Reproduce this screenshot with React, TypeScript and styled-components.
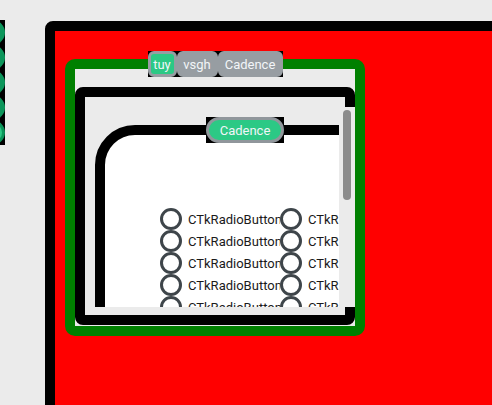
import React from "react";
import styled, { createGlobalStyle } from "styled-components";

const Global = createGlobalStyle`
  html, body { margin: 0; padding: 0; background: #ebebeb; }
  body { font-family: Roboto, "Liberation Sans", sans-serif; }
`;

const Screen = styled.div`
  width: 492px;
  height: 405px;
  overflow: hidden;
  display: flex;
  align-items: flex-start;
  background: #ebebeb;
`;

const SideStrip = styled.div`
  flex-shrink: 0;
  width: 5px;
  height: 125px;
  margin-top: 20px;
  background: #000;
  overflow: hidden;
  display: flex;
  flex-direction: column;
`;

const SideDot = styled.div<{ $active?: boolean }>`
  flex-shrink: 0;
  box-sizing: border-box;
  width: 25px;
  height: 25px;
  margin-left: -20px;
  border-radius: 50%;
  background: ${(p) => (p.$active ? "#2CC985" : "#0C955A")};
  border: ${(p) => (p.$active ? "3px solid #0C955A" : "none")};
`;

const Window = styled.div`
  flex-shrink: 0;
  box-sizing: border-box;
  width: 470px;
  height: 400px;
  margin: 21px 0 0 40px;
  padding: 28px 0 0 10px;
  border: 10px solid #000;
  border-radius: 8px;
  background: #ff0000;
`;

const TabView = styled.div`
  position: relative;
  box-sizing: border-box;
  width: 300px;
  height: 277px;
  padding-top: 18px;
  border: 10px solid #008000;
  border-radius: 10px;
  background: #ebebeb;
`;

const TabBar = styled.div`
  position: absolute;
  top: -18px;
  left: 0;
  right: 0;
  display: flex;
  justify-content: center;
`;

const Segment = styled.div<{ $w: number }>`
  width: ${(p) => p.$w}px;
  height: 26px;
  background: #000;
`;

const SegmentFace = styled.div<{ $selected?: boolean }>`
  box-sizing: border-box;
  height: 100%;
  display: flex;
  align-items: center;
  justify-content: center;
  border: 3px solid #979da2;
  border-radius: 6px;
  background: ${(p) => (p.$selected ? "#2CC985" : "#979DA2")};
  color: #f2f5f8;
  font-size: 13px;
  line-height: 1;
`;

const ScrollFrame = styled.div`
  position: relative;
  box-sizing: border-box;
  height: 238px;
  border: 10px solid #000;
  border-radius: 8px;
  background: #ebebeb;
`;

const Viewport = styled.div`
  box-sizing: border-box;
  width: 254px;
  height: 210px;
  padding: 28px 0 0 10px;
  overflow: hidden;
`;

const Card = styled.div`
  position: relative;
  box-sizing: border-box;
  width: 300px;
  height: 300px;
  padding: 73px 0 0 55px;
  border: 10px solid #000;
  border-radius: 40px;
  background: #fff;
`;

const CardHeader = styled.div`
  position: absolute;
  top: -18px;
  left: 0;
  right: 0;
  display: flex;
  justify-content: center;
`;

const ButtonPlate = styled.div`
  width: 78px;
  height: 26px;
  background: #000;
`;

const PillButton = styled.div`
  box-sizing: border-box;
  height: 100%;
  display: flex;
  align-items: center;
  justify-content: center;
  border: 3px solid #90969b;
  border-radius: 13px;
  background: #2cc985;
  color: #f2f5f8;
  font-size: 13px;
  line-height: 1;
`;

const RadioGrid = styled.div`
  display: grid;
  grid-template-columns: repeat(2, 120px);
  grid-auto-rows: 22px;
`;

const Radio = styled.div`
  display: flex;
  align-items: center;
  gap: 6px;
  min-width: 0;
  overflow: hidden;
`;

const RadioCircle = styled.span`
  flex-shrink: 0;
  box-sizing: border-box;
  width: 22px;
  height: 22px;
  border: 3px solid #3e454a;
  border-radius: 50%;
  background: #fff;
`;

const RadioLabel = styled.span`
  white-space: nowrap;
  overflow: hidden;
  color: #1a1a1a;
  font-size: 13px;
`;

const Scrollbar = styled.div`
  position: absolute;
  top: 10px;
  right: -10px;
  box-sizing: border-box;
  width: 16px;
  height: 200px;
  padding: 3px 4px;
  background: #ebebeb;
`;

const Thumb = styled.div<{ $h: number }>`
  height: ${(p) => p.$h}px;
  border-radius: 4px;
  background: #8c8c8c;
`;

const segments = [
  { label: "tuy", w: 29, selected: true },
  { label: "vsgh", w: 41 },
  { label: "Cadence", w: 65 },
];

export default function App() {
  const radios = Array.from({ length: 12 }, (_, i) => i);
  return (
    <>
      <Global />
      <Screen>
        <SideStrip>
          <SideDot />
          <SideDot />
          <SideDot />
          <SideDot />
          <SideDot $active />
        </SideStrip>
        <Window>
          <TabView>
            <TabBar>
              {segments.map((s) => (
                <Segment key={s.label} $w={s.w}>
                  <SegmentFace $selected={s.selected}>{s.label}</SegmentFace>
                </Segment>
              ))}
            </TabBar>
            <ScrollFrame>
              <Viewport>
                <Card>
                  <CardHeader>
                    <ButtonPlate>
                      <PillButton>Cadence</PillButton>
                    </ButtonPlate>
                  </CardHeader>
                  <RadioGrid>
                    {radios.map((i) => (
                      <Radio key={i}>
                        <RadioCircle />
                        <RadioLabel>CTkRadioButton</RadioLabel>
                      </Radio>
                    ))}
                  </RadioGrid>
                </Card>
              </Viewport>
              <Scrollbar>
                <Thumb $h={90} />
              </Scrollbar>
            </ScrollFrame>
          </TabView>
        </Window>
      </Screen>
    </>
  );
}
